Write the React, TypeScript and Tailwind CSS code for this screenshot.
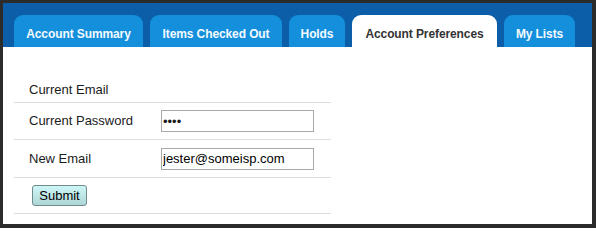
const tabs = [
  { label: "Account Summary", width: "w-[129px]", active: false },
  { label: "Items Checked Out", width: "w-[132px]", active: false },
  { label: "Holds", width: "w-[56px]", active: false },
  { label: "Account Preferences", width: "w-[145px]", active: true },
  { label: "My Lists", width: "w-[71px]", active: false },
];

const font = { fontFamily: '"Liberation Sans", Arial, sans-serif' };

export default function App() {
  return (
    <div
      className="w-[596px] h-[228px] bg-[#2b2b2b] pt-[3px] pl-[3px] pr-[4px] pb-[4px]"
      style={font}
    >
      <div className="flex flex-col h-full bg-white">
        <div className="flex items-end gap-[7px] bg-[#0b5ea7] pt-3 pl-[11px]">
          {tabs.map((t) => (
            <div
              key={t.label}
              className={
                (t.active
                  ? "bg-white text-[#333333] "
                  : "bg-[#148fdb] text-[#f4faff] ") +
                t.width +
                " rounded-t-[9px] pt-3 pb-[6px] text-center whitespace-nowrap text-[12px] leading-[14px] font-bold tracking-[-0.1px]"
              }
            >
              {t.label}
            </div>
          ))}
        </div>

        <div className="pt-[31px] pl-[11px]">
          <div className="w-[317px] text-[13px] text-[#1a1a1a]">
            <div className="flex h-[25px] items-center border-b border-[#dddddd] pl-[15px]">
              Current Email
            </div>
            <div className="flex h-[37px] items-center border-b border-[#dddddd] pl-[15px]">
              <span className="w-[132px]">Current Password</span>
              <input
                type="password"
                defaultValue="1234"
                className="h-[22px] w-[153px] border border-[#a9a9a9] px-[1px] text-[13px] outline-none"
                style={font}
              />
            </div>
            <div className="flex h-[38px] items-center border-b border-[#dddddd] pl-[15px]">
              <span className="w-[132px]">New Email</span>
              <input
                type="text"
                defaultValue="jester@someisp.com"
                className="h-[22px] w-[153px] border border-[#a9a9a9] px-[1px] text-[13px] text-black outline-none"
                style={font}
              />
            </div>
            <div className="flex h-[36px] items-center border-b border-[#dddddd] pl-[18px]">
              <button
                className="h-[21px] w-[55px] rounded-[3px] border border-[#6f8a8a] bg-gradient-to-b from-[#cdf6f8] to-[#aed6d6] text-[13px] leading-[19px] text-black"
                style={font}
              >
                Submit
              </button>
            </div>
          </div>
        </div>
      </div>
    </div>
  );
}
